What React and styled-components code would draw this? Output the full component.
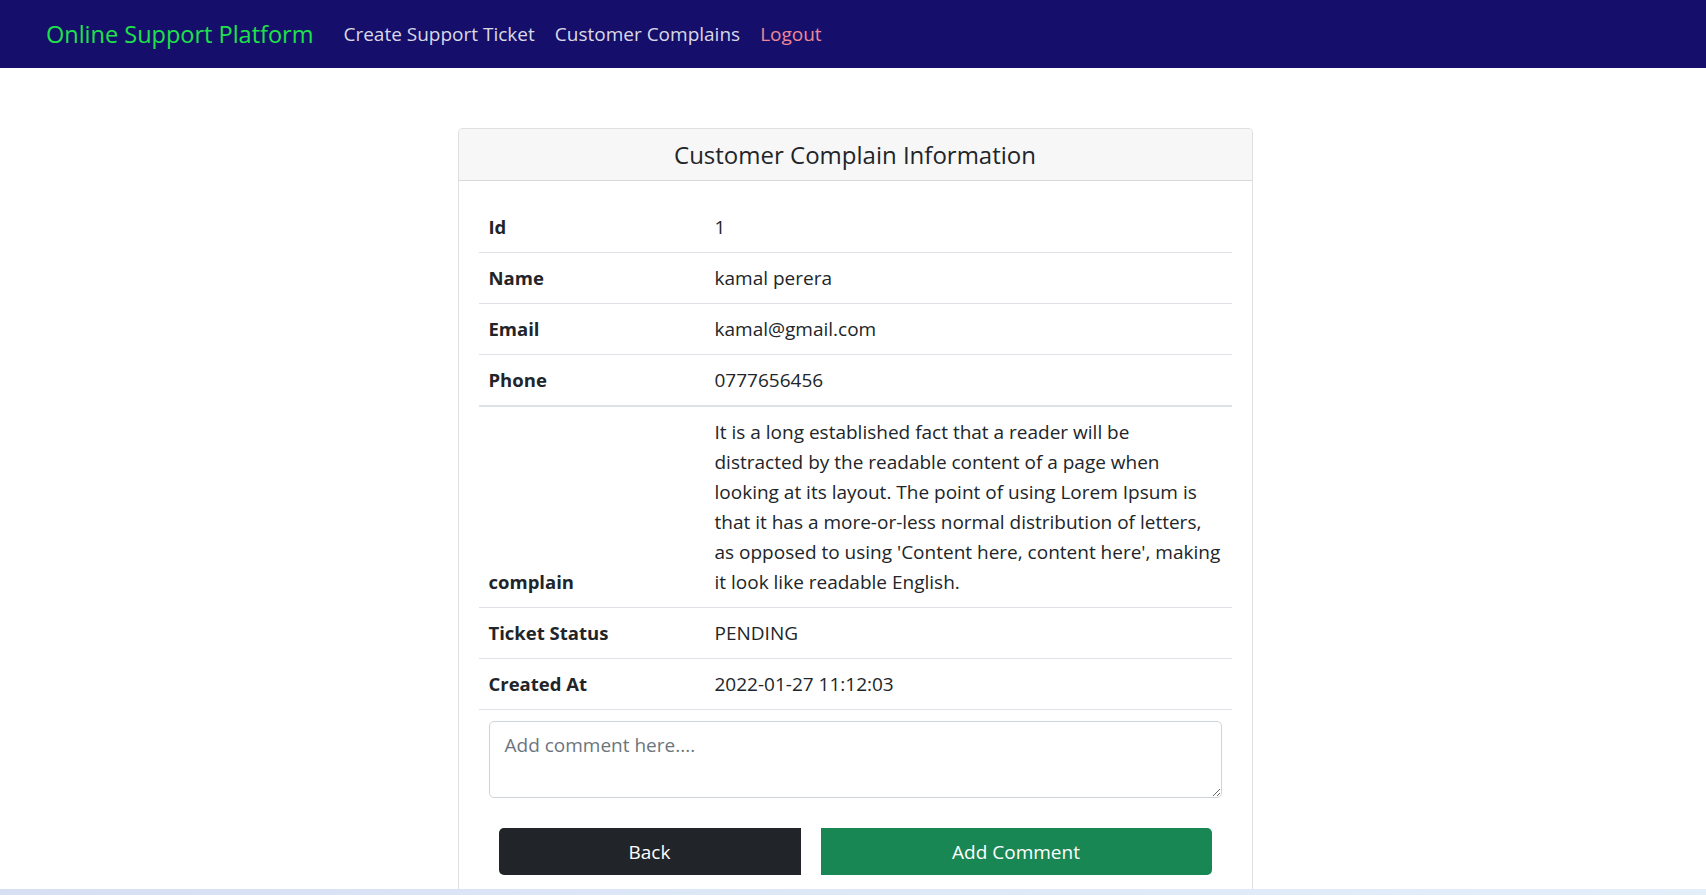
import React from "react";
import styled, { createGlobalStyle } from "styled-components";

const GlobalStyle = createGlobalStyle`
  body {
    margin: 0;
    background: #fff;
    color: #212529;
    font-family: "Open Sans", "Noto Sans", sans-serif;
    font-size: 19px;
    line-height: 30px;
  }
  * {
    box-sizing: border-box;
  }
`;

const NavBar = styled.nav`
  height: 68px;
  background-color: #150f6b;
  display: flex;
  align-items: center;
  padding-left: 46px;
`;

const Brand = styled.a`
  font-size: 23.5px;
  color: #1fe24a;
  margin-right: 20px;
  text-decoration: none;
`;

const NavLink = styled.a`
  padding: 0 10px;
  font-size: 19px;
  color: ${(p) => (p.danger ? "#f08799" : "rgba(255, 255, 255, 0.85)")};
  text-decoration: none;
  cursor: pointer;
`;

const Page = styled.main`
  padding: 60px 0 0 4px;
`;

const Card = styled.section`
  width: 795px;
  margin: 0 auto;
  border: 1px solid rgba(0, 0, 0, 0.125);
  border-radius: 5px;
  background: #fff;
`;

const CardHeader = styled.header`
  padding: 11px 20px 10px;
  background-color: rgba(0, 0, 0, 0.03);
  border-bottom: 1px solid rgba(0, 0, 0, 0.125);
  border-radius: 5px 5px 0 0;
  text-align: center;
`;

const Title = styled.h5`
  margin: 0;
  font-size: 24px;
  font-weight: 500;
  line-height: 30px;
`;

const CardBody = styled.div`
  padding: 21px 20px 40px;
`;

const Table = styled.table`
  width: 100%;
  border-collapse: collapse;
  margin-bottom: 11px;
`;

const Row = styled.tr`
  border-bottom: ${(p) => (p.thick ? "2px" : "1px")} solid #dee2e6;
`;

const Label = styled.th`
  width: 226px;
  padding: 10px;
  text-align: left;
  vertical-align: bottom;
  font-weight: 700;
  font-size: 18.5px;
`;

const Value = styled.td`
  padding: 10px;
  vertical-align: bottom;
`;

const CommentBox = styled.textarea`
  display: block;
  width: calc(100% - 20px);
  height: 77px;
  margin: 0 10px;
  padding: 8px 15px 7px;
  border: 1px solid #ced4da;
  border-radius: 5px;
  font-family: inherit;
  font-size: 19px;
  line-height: 30px;
  color: #212529;
  resize: vertical;

  &::placeholder {
    color: #6c757d;
  }
`;

const Actions = styled.div`
  display: flex;
  gap: 20px;
  margin-top: 30px;
  padding-left: 20px;
`;

const Button = styled.button`
  width: ${(p) => p.w}px;
  height: 47px;
  padding-top: 2px;
  border: none;
  border-radius: ${(p) => (p.left ? "5px 0 0 5px" : "0 5px 5px 0")};
  background-color: ${(p) => p.bg};
  color: #fff;
  font-family: inherit;
  font-size: 19px;
  cursor: pointer;
`;

const Taskbar = styled.div`
  position: fixed;
  left: 0;
  right: 0;
  bottom: 0;
  height: 6px;
  background: linear-gradient(90deg, #d7dff3 0%, #dde8f7 45%, #e2eefa 100%);
`;

const complain = {
  id: 1,
  name: "kamal perera",
  email: "kamal@gmail.com",
  phone: "0777656456",
  complain:
    "It is a long established fact that a reader will be distracted by the readable content of a page when looking at its layout. The point of using Lorem Ipsum is that it has a more-or-less normal distribution of letters, as opposed to using 'Content here, content here', making it look like readable English.",
  status: "PENDING",
  createdAt: "2022-01-27 11:12:03",
};

const App = () => {
  const rows = [
    ["Id", complain.id],
    ["Name", complain.name],
    ["Email", complain.email],
    ["Phone", complain.phone],
    ["complain", complain.complain],
    ["Ticket Status", complain.status],
    ["Created At", complain.createdAt],
  ];

  return (
    <>
      <GlobalStyle />
      <NavBar>
        <Brand>Online Support Platform</Brand>
        <NavLink>Create Support Ticket</NavLink>
        <NavLink>Customer Complains</NavLink>
        <NavLink danger>Logout</NavLink>
      </NavBar>
      <Page>
        <Card>
          <CardHeader>
            <Title>Customer Complain Information</Title>
          </CardHeader>
          <CardBody>
            <Table>
              <tbody>
                {rows.map(([label, value], index) => (
                  <Row key={label} thick={index === 3}>
                    <Label>{label}</Label>
                    <Value>{value}</Value>
                  </Row>
                ))}
              </tbody>
            </Table>
            <CommentBox placeholder="Add comment here...." />
            <Actions>
              <Button left w={302} bg="#212529">
                Back
              </Button>
              <Button w={391} bg="#198754">
                Add Comment
              </Button>
            </Actions>
          </CardBody>
        </Card>
      </Page>
      <Taskbar />
    </>
  );
};

export default App;
